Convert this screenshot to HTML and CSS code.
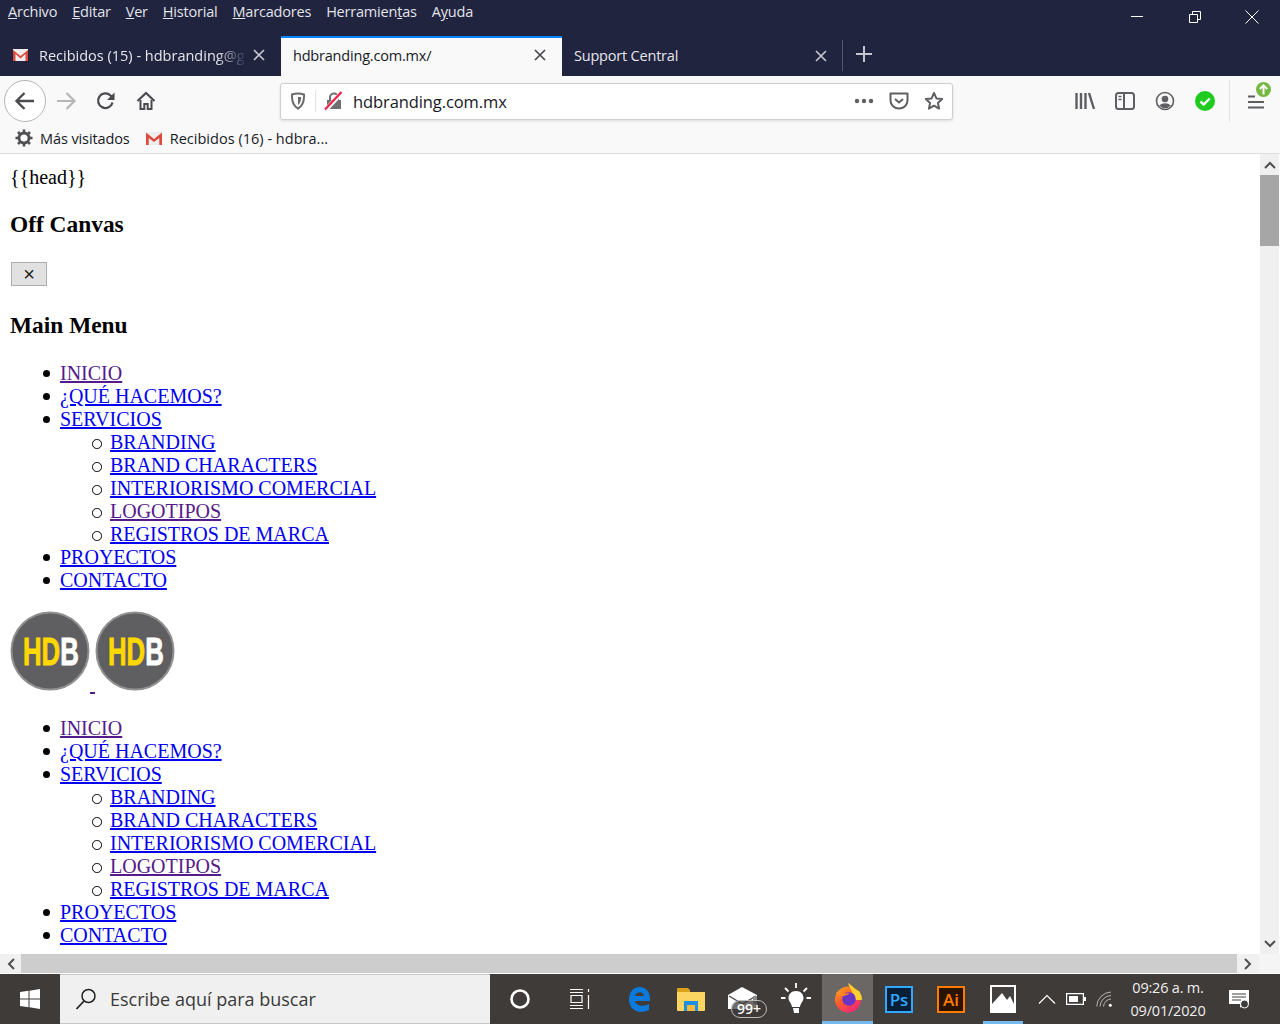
FILE: index.html
```html
<!DOCTYPE html>
<html lang="es">
<head>
<meta charset="utf-8">
<title>hdbranding.com.mx</title>
<link rel="stylesheet" href="styles.css">
</head>
<body>
<div class="window">
  <header class="chrome-top">
    <div class="menubar">
      <nav class="menu">
        <span><u>A</u>rchivo</span><span><u>E</u>ditar</span><span><u>V</u>er</span><span><u>H</u>istorial</span><span><u>M</u>arcadores</span><span>Herramien<u>t</u>as</span><span>A<u>y</u>uda</span>
      </nav>
      <div class="winctl">
        <button class="winbtn"><svg width="14" height="14" viewBox="0 0 14 14"><path d="M1 6.500h12" stroke="#fff" fill="none"/></svg></button>
        <button class="winbtn"><svg width="14" height="14" viewBox="0 0 14 14"><path d="M1.500 4.500h8v8h-8zM4.500 4V1.500h8v8H10" stroke="#fff" fill="none"/></svg></button>
        <button class="winbtn"><svg width="14" height="14" viewBox="0 0 14 14"><path d="M.5.500l13 13M13.500.500l-13 13" stroke="#fff" fill="none"/></svg></button>
      </div>
    </div>
    <div class="tabs">
      <div class="tab first">
        <svg class="favicon" width="17" height="14" viewBox="0 0 17 14"><path d="M1 1h15v12H1z" fill="#eee"/><path d="M1 13V2l7.500 6L16 2v11h-2.500V6L8.500 10.500 3.500 6v7z" fill="#db4a3c"/></svg>
        <span class="tab-title fade">Recibidos (15) - hdbranding@g</span>
        <svg class="tab-x" width="12" height="12" viewBox="0 0 12 12"><path d="M1 1l10 10M11 1L1 11" stroke="#c4c5ce" stroke-width="1.700" fill="none"/></svg>
      </div>
      <div class="tab active">
        <span class="tab-title">hdbranding.com.mx/</span>
        <svg class="tab-x" width="12" height="12" viewBox="0 0 12 12"><path d="M1 1l10 10M11 1L1 11" stroke="#4a4a4f" stroke-width="1.700" fill="none"/></svg>
      </div>
      <div class="tab last">
        <span class="tab-title">Support Central</span>
        <svg class="tab-x" width="12" height="12" viewBox="0 0 12 12"><path d="M1 1l10 10M11 1L1 11" stroke="#c4c5ce" stroke-width="1.700" fill="none"/></svg>
      </div>
      <div class="newtab">
        <svg width="18" height="18" viewBox="0 0 18 18"><path d="M9 1v16M1 9h16" stroke="#c4c5ce" stroke-width="2" fill="none"/></svg>
      </div>
    </div>
  </header>

  <div class="toolbar">
    <div class="nav-left">
      <div class="back"><svg width="22" height="20" viewBox="0 0 22 20"><path d="M20 10H3M10.500 2L2.500 10l8 8" stroke="#4a4a4f" stroke-width="2.400" fill="none"/></svg></div>
      <div class="navbtn fwd"><svg width="22" height="20" viewBox="0 0 22 20"><path d="M2 10h17M11.500 2l8 8-8 8" stroke="#b6b6b8" stroke-width="2.200" fill="none"/></svg></div>
      <div class="navbtn"><svg width="20" height="20" viewBox="0 0 20 20"><path d="M16.500 11.500A7.300 7.300 0 1 1 14.500 4.500L17 7" stroke="#4a4a4f" stroke-width="2.300" fill="none"/><path d="M18.500 1.500v7.500h-7.500z" fill="#4a4a4f"/></svg></div>
      <div class="navbtn home"><svg width="20" height="20" viewBox="0 0 20 20"><path d="M1.500 10L10 2l8.500 8" stroke="#4a4a4f" stroke-width="2.200" fill="none"/><path d="M4.500 9v9h3.800v-5h3.400v5h3.800V9" stroke="#4a4a4f" stroke-width="2" fill="none"/></svg></div>
    </div>
    <div class="urlbar">
      <span class="url-shield"><svg width="16" height="18" viewBox="0 0 16 18"><path d="M2 2.500Q8 .5 14 2.500 14.500 13 8 16.500 1.500 13 2 2.500z" stroke="#6b6b6f" stroke-width="2" fill="none"/><path d="M8 5v8Q11 11 11.200 5z" fill="#6b6b6f"/></svg></span>
      <span class="url-lock"><svg width="20" height="20" viewBox="0 0 20 20"><path d="M6 9V6.500a4 4 0 0 1 8 0V9" stroke="#6f6f72" stroke-width="2" fill="none"/><path d="M3 9h14v9H3z" fill="#6f6f72"/><path d="M2 18.500L18 1.500" stroke="#f9f9fa" stroke-width="4.500"/><path d="M1 18.500L17.500 1" stroke="#f1224a" stroke-width="2.200"/></svg></span>
      <span class="url-text">hdbranding.com.mx</span>
      <span class="url-actions">
        <svg width="20" height="6" viewBox="0 0 20 6"><circle cx="3" cy="3" r="2.200" fill="#5f5f63"/><circle cx="10" cy="3" r="2.200" fill="#5f5f63"/><circle cx="17" cy="3" r="2.200" fill="#5f5f63"/></svg>
        <svg width="20" height="18" viewBox="0 0 20 18"><path d="M1.500 1.500h17v7a8.500 8 0 0 1-17 0z" stroke="#5f5f63" stroke-width="2" stroke-linejoin="round" fill="none"/><path d="M6 7l4 3.500L14 7" stroke="#5f5f63" stroke-width="2" fill="none"/></svg>
        <svg width="20" height="20" viewBox="0 0 20 20"><path d="M10 2l2.400 5.400 5.800.6-4.300 3.900 1.200 5.700L10 14.700 4.900 17.600l1.200-5.700L1.800 8l5.800-.6z" stroke="#5f5f63" stroke-width="2" stroke-linejoin="round" fill="none"/></svg>
      </span>
    </div>
    <div class="tools">
      <svg width="20" height="18" viewBox="0 0 20 18"><path d="M1.500 1v16M6 1v16M10.500 1v16M14 1l5 16" stroke="#5f5f63" stroke-width="2.400" fill="none"/></svg>
      <svg width="20" height="18" viewBox="0 0 20 18"><rect x="1" y="1" width="18" height="16" rx="2.500" stroke="#5f5f63" stroke-width="2" fill="none"/><path d="M9 1v16" stroke="#5f5f63" stroke-width="2"/><path d="M3.500 4.500h3M3.500 7.500h3" stroke="#5f5f63" stroke-width="1.500"/></svg>
      <svg width="20" height="20" viewBox="0 0 20 20"><circle cx="10" cy="10" r="8.500" stroke="#5f5f63" stroke-width="1.600" fill="none"/><circle cx="10" cy="8" r="3.300" fill="#5f5f63"/><path d="M4 14.500Q10 10 16 14.500 10 20 4 14.500z" fill="#5f5f63"/></svg>
      <svg width="20" height="20" viewBox="0 0 20 20"><circle cx="10" cy="10" r="10" fill="#1ecb1e"/><path d="M5.500 10.500l3.200 3 6-6" stroke="#fff" stroke-width="2.400" fill="none"/></svg>
      <span class="tool-sep"></span>
      <span class="hamburger">
        <svg width="16" height="14" viewBox="0 0 16 14"><path d="M0 1.500h7M0 7h16M0 12.500h16" stroke="#5f5f63" stroke-width="2.200"/></svg>
        <svg class="update" width="15" height="15" viewBox="0 0 15 15"><circle cx="7.500" cy="7.500" r="7.500" fill="#75b843"/><path d="M7.500 12.500V3.500M3.800 7l3.700-3.700L11.200 7" stroke="#fff" stroke-width="2" fill="none"/></svg>
      </span>
    </div>
  </div>

  <div class="bookmarks">
    <span class="bm"><svg width="18" height="18" viewBox="0 0 18 18"><circle cx="9" cy="9" r="5" stroke="#4f4f53" stroke-width="2.800" fill="none"/><path d="M9 .5v3.500M9 14v3.500M.5 9H4M14 9h3.500M3 3l2.500 2.500M12.500 12.500L15 15M15 3l-2.500 2.500M5.500 12.500L3 15" stroke="#4f4f53" stroke-width="2.600"/></svg>Más visitados</span>
    <span class="bm bm-mail"><svg width="18" height="15" viewBox="0 0 18 15"><path d="M1 1h16v13H1z" fill="#eee"/><path d="M1 14V1.500l8 6.500 8-6.500V14h-2.700V7L9 11 3.700 7v7z" fill="#db4a3c"/></svg>Recibidos (16) - hdbra...</span>
  </div>

  <div class="viewport">
    <main class="page">
      <div>{{head}}</div>
      <h3 class="h-first">Off Canvas</h3>
      <div><button class="closebtn">×</button></div>
      <h3 class="h-second">Main Menu</h3>
      <ul>
        <li><a class="seen" href="#">INICIO</a></li>
        <li><a href="#">¿QUÉ HACEMOS?</a></li>
        <li><a href="#">SERVICIOS</a>
          <ul>
            <li><a href="#">BRANDING</a></li>
            <li><a href="#">BRAND CHARACTERS</a></li>
            <li><a href="#">INTERIORISMO COMERCIAL</a></li>
            <li><a class="seen" href="#">LOGOTIPOS</a></li>
            <li><a href="#">REGISTROS DE MARCA</a></li>
          </ul>
        </li>
        <li><a href="#">PROYECTOS</a></li>
        <li><a href="#">CONTACTO</a></li>
      </ul>
      <div class="logos"><a class="seen" href="#"><svg class="logo" width="80" height="80" viewBox="0 0 80 80"><circle cx="40" cy="40" r="38.500" fill="#5f5f61" stroke="#8f8f90" stroke-width="2"/><text class="logo-text" transform="translate(13 54) scale(.66 1)"><tspan class="logo-hd">HD</tspan><tspan class="logo-b">B</tspan></text></svg> </a><a class="seen" href="#"><svg class="logo" width="80" height="80" viewBox="0 0 80 80"><circle cx="40" cy="40" r="38.500" fill="#5f5f61" stroke="#8f8f90" stroke-width="2"/><text class="logo-text" transform="translate(13 54) scale(.66 1)"><tspan class="logo-hd">HD</tspan><tspan class="logo-b">B</tspan></text></svg></a></div>
      <ul>
        <li><a class="seen" href="#">INICIO</a></li>
        <li><a href="#">¿QUÉ HACEMOS?</a></li>
        <li><a href="#">SERVICIOS</a>
          <ul>
            <li><a href="#">BRANDING</a></li>
            <li><a href="#">BRAND CHARACTERS</a></li>
            <li><a href="#">INTERIORISMO COMERCIAL</a></li>
            <li><a class="seen" href="#">LOGOTIPOS</a></li>
            <li><a href="#">REGISTROS DE MARCA</a></li>
          </ul>
        </li>
        <li><a href="#">PROYECTOS</a></li>
        <li><a href="#">CONTACTO</a></li>
      </ul>
    </main>
    <div class="vscroll">
      <span class="sb-btn"><svg width="12" height="8" viewBox="0 0 12 8"><path d="M1 7l5-5 5 5" stroke="#505050" stroke-width="2" fill="none"/></svg></span>
      <span class="vthumb"></span>
      <span class="sb-fill"></span>
      <span class="sb-btn"><svg width="12" height="8" viewBox="0 0 12 8"><path d="M1 1l5 5 5-5" stroke="#505050" stroke-width="2" fill="none"/></svg></span>
    </div>
  </div>

  <div class="hscroll">
    <span class="hbtn"><svg width="8" height="12" viewBox="0 0 8 12"><path d="M7 1L2 6l5 5" stroke="#505050" stroke-width="2" fill="none"/></svg></span>
    <span class="hthumb"></span>
    <span class="hbtn wide"><svg width="8" height="12" viewBox="0 0 8 12"><path d="M1 1l5 5-5 5" stroke="#505050" stroke-width="2" fill="none"/></svg></span>
    <span class="corner"></span>
  </div>

  <footer class="taskbar">
    <div class="start"><svg width="20" height="20" viewBox="0 0 20 20"><path d="M0 3l8.500-1.200v7.700H0zM9.500 1.700L20 0v9.500H9.500zM0 10.500h8.500v7.700L0 17zM9.500 10.500H20V20L9.500 18.300z" fill="#fff"/></svg></div>
    <div class="search">
      <svg width="22" height="22" viewBox="0 0 22 22"><circle cx="13.500" cy="8" r="6.500" stroke="#222" stroke-width="1.500" fill="none"/><path d="M9 13l-7.500 8" stroke="#222" stroke-width="1.800"/></svg>
      <span>Escribe aquí para buscar</span>
    </div>
    <div class="apps">
      <span class="app"><svg width="20" height="20" viewBox="0 0 20 20"><circle cx="10" cy="10" r="8.500" stroke="#fff" stroke-width="2.600" fill="none"/></svg></span>
      <span class="app tv"><svg width="22" height="20" viewBox="0 0 22 20"><path d="M1 .5h13M1 3.500h13M1 16.500h13M1 19.500h13M2 6.500h11v7H2zM19.500 0v3M19.500 6v14" stroke="#fff" stroke-width="1.200" fill="none"/></svg></span>
      <span class="app"><svg width="26" height="28" viewBox="0 0 26 28"><path d="M3 15C3 6 8 2 14 2c6 0 10 5 10 12v2H9c.5 5 9 6 14 3v6c-8 4-19 2-20-10zM9 11h9c0-5-8-5-9 0z" fill="#0a7bdc"/></svg></span>
      <span class="app"><svg width="28" height="24" viewBox="0 0 28 24"><path d="M0 2a1 1 0 0 1 1-1h10l2 2v3H0z" fill="#d9a118"/><path d="M0 5h28v18a1 1 0 0 1-1 1H1a1 1 0 0 1-1-1z" fill="#fcd462"/><path d="M7 14h14v10h-3v-6h-8v6H7z" fill="#1d8fe0"/><path d="M10 18h8v6h-8z" fill="#f6b93b"/></svg></span>
      <span class="app"><svg width="30" height="26" viewBox="0 0 30 26"><path d="M0 9L14 1l15 8v14H0z" fill="#fff"/><path d="M1 10l13.500 8L28 10" stroke="#45413e" stroke-width="1.300" fill="none"/><path d="M25 10h4v8h-4z" fill="#8a8a8a"/></svg><span class="mailbadge">99+</span></span>
      <span class="app bulb"><svg width="30" height="32" viewBox="0 0 30 32"><path d="M15 8c-5 0-7.500 3.500-7.500 7 0 3.500 3 5 3.500 9h8c.5-4 3.500-5.500 3.500-9 0-3.500-2.500-7-7.500-7z" fill="#fff"/><path d="M12 25h6v5h-5z" fill="#fff"/><path d="M15 0v5M4 5l3.500 3.500M26 5l-3.500 3.500M0 15h4.500M25.500 15H30" stroke="#fff" stroke-width="1.800"/></svg></span>
      <span class="app current"><svg width="30" height="30" viewBox="0 0 30 30"><defs><linearGradient id="fx" x1="0" y1="0" x2=".7" y2="1"><stop offset="0" stop-color="#ffb01f"/><stop offset=".5" stop-color="#ff5a2c"/><stop offset="1" stop-color="#f0267a"/></linearGradient></defs><circle cx="15" cy="16.500" r="13" fill="url(#fx)"/><path d="M15 0c5 3 6 6 11 8 3 4 3 8 3 9h-8C21 10 17 6 15 0z" fill="#ffcf2e"/><circle cx="16" cy="16" r="6.800" fill="#6a35c4"/><path d="M3 9q5-1 8 2l6-1q-3 3-7 3-5 0-7-4z" fill="#ff8a1f"/></svg></span>
      <span class="app"><span class="adobe ps">Ps</span></span>
      <span class="app"><span class="adobe ai">Ai</span></span>
      <span class="app open"><svg width="26" height="28" viewBox="0 0 26 28"><path d="M0 0h26v28H0z" fill="#fff"/><path d="M2 2h22v17l-4-8-3 4-5-7-10 11z" fill="#45413e"/></svg></span>
    </div>
    <div class="tray">
      <svg width="18" height="10" viewBox="0 0 18 10"><path d="M1 9.500l8-8 8 8" stroke="#fff" stroke-width="1.200" fill="none"/></svg>
      <svg width="20" height="12" viewBox="0 0 20 12"><path d="M.6.600h16.800v10.800H.6z" stroke="#fff" stroke-width="1.200" fill="none"/><path d="M3 3h9v6H3z" fill="#fff"/><path d="M18 4h2v4h-2z" fill="#fff"/></svg>
      <svg width="16" height="16" viewBox="0 0 16 16"><path d="M.7 15.500A15 15 0 0 1 15 1M4 15.500A11.500 11.500 0 0 1 15 4.500M7.500 15.500A8 8 0 0 1 15 8" stroke="#b8b6b4" fill="none"/><circle cx="14.300" cy="14.300" r="1.500" fill="#fff"/></svg>
      <div class="clock"><span>09:26 a. m.</span><span>09/01/2020</span></div>
      <span class="notif"><svg width="21" height="19" viewBox="0 0 21 19"><path d="M0 0h20v14h-6l-3 4v-4H0z" fill="#fff"/><path d="M3 4h14M3 7h14M3 10h9" stroke="#45413e" stroke-width="1"/><circle cx="15.500" cy="14" r="4" fill="#3f3b39" stroke="#fff"/></svg></span>
    </div>
  </footer>
</div>
</body>
</html>
```

FILE: styles.css
```css
* { box-sizing: border-box; }
html, body { margin: 0; padding: 0; background: #fff; }
.window { width: 1280px; height: 1024px; display: flex; flex-direction: column; overflow: hidden; font-family: "Open Sans", "Noto Sans", sans-serif; }

.chrome-top { background: #20243f; height: 76px; color: #fff; flex: none; }
.menubar { height: 36px; display: flex; justify-content: space-between; }
.menu { display: flex; gap: 15px; padding: 2px 0 0 8px; font-size: 14.500px; line-height: 19px; color: #e2e3ea; letter-spacing: -.2px; }
.winctl { display: flex; }
.winbtn { width: 58px; height: 34px; background: none; border: 0; padding: 0; display: flex; align-items: center; justify-content: center; }
.winbtn:last-child { width: 56px; }

.tabs { height: 40px; display: flex; }
.tab { width: 281px; display: flex; align-items: center; padding: 0 15px 2px 12px; font-size: 14.500px; color: #e6e6ec; letter-spacing: -.2px; }
.tab-title { flex: 1; white-space: nowrap; overflow: hidden; }
.tab.first { padding-right: 16px; letter-spacing: 0; }
.fade { margin-left: 10px; margin-right: 6px; -webkit-mask-image: linear-gradient(to right, #000 85%, transparent); mask-image: linear-gradient(to right, #000 85%, transparent); }
.tab.active { background: #f9f9fa; color: #18191f; border-top: 2px solid #0a84ff; padding-right: 16px; padding-bottom: 4px; }
.tab.last { border-right: 1px solid #52556c; height: 31px; margin-top: 4px; padding-bottom: 0; }
.newtab { width: 42px; display: flex; align-items: center; justify-content: center; padding-bottom: 4px; }

.toolbar { height: 49px; flex: none; background: #f9f9fa; display: flex; align-items: center; }
.nav-left { display: flex; align-items: center; width: 280px; padding-left: 4px; }
.back { width: 42px; height: 42px; border-radius: 50%; border: 1px solid #b6b6b8; background: #fff; display: flex; align-items: center; justify-content: center; }
.navbtn { width: 40px; display: flex; justify-content: center; }
.urlbar { width: 673px; height: 37px; margin-top: 1px; border: 1px solid #cfcfd1; border-radius: 3px; background: #fff; box-shadow: 0 1px 3px rgba(0,0,0,.12); display: flex; align-items: center; }
.url-shield { width: 35px; height: 22px; display: flex; align-items: center; justify-content: center; border-right: 1px solid #e2e2e4; }
.url-lock { width: 36px; display: flex; justify-content: center; margin-right: 1px; }
.url-text { flex: 1; font-size: 16.500px; color: #18191f; letter-spacing: -.1px; }
.url-actions { display: flex; align-items: center; gap: 15px; padding-right: 8px; }
.tools { flex: 1; display: flex; align-items: center; gap: 20px; padding-left: 122px; }
.tool-sep { width: 1px; height: 42px; background: #e2e2e4; margin-left: -6px; margin-right: -2px; }
.hamburger { position: relative; display: flex; margin-top: 2px; }
.update { position: absolute; right: -7px; top: -13px; }

.bookmarks { height: 29px; flex: none; background: #f9f9fa; border-bottom: 1px solid #dedee0; display: flex; gap: 15px; padding: 0 0 2px 15px; align-items: center; font-size: 14.500px; letter-spacing: -.1px; color: #18191f; }
.bm { display: flex; align-items: center; gap: 7px; }
.bm-mail { letter-spacing: .02px; }

.viewport { flex: 1; min-height: 0; display: flex; background: #fff; }
.page { flex: none; width: 1260px; padding: 11.500px 10px 0; font-family: "Liberation Serif", serif; font-size: 20px; line-height: 23px; color: #000; overflow: hidden; }
.page h3 { font-size: 23.400px; line-height: 27px; margin: 23.400px 0; font-weight: bold; }
.page h3.h-first { margin-top: 22.400px; margin-bottom: 24.400px; }
.page h3.h-second { margin-top: 25.400px; }
.page ul { margin: 19px 0; padding-left: 50px; }
.page ul ul { margin: 0; }
.page li { list-style: none; position: relative; }
.page li::before { content: ""; position: absolute; left: -17px; top: 8px; width: 7px; height: 7px; border-radius: 50%; background: #000; }
.page ul ul li::before { background: none; border: 1px solid #000; left: -18px; width: 7.500px; height: 7.500px; }
.page a { color: #0000ee; }
.page a.seen { color: #551a8b; }
.closebtn { display: block; width: 36px; height: 24px; margin-left: 1px; padding: 0; background: #e1e1e1; border: 1px solid #adadad; font-family: "Liberation Sans", sans-serif; font-size: 20px; line-height: 22px; color: #222; }
.logos { height: 87px; }
.logo { vertical-align: baseline; }
.logo-text { font-family: "Liberation Sans", sans-serif; font-weight: bold; font-size: 39px; stroke-width: .9px; }
.logo-hd { fill: #ffd800; stroke: #ffd800; }
.logo-b { fill: #fff; stroke: #fff; }

.vscroll { width: 19px; flex: none; margin-right: 1px; background: #f0f0f0; display: flex; flex-direction: column; }
.sb-btn { height: 21px; flex: none; display: flex; align-items: center; justify-content: center; }
.vthumb { height: 71px; flex: none; background: #a6a6a6; }
.sb-fill { flex: 1; }

.hscroll { height: 20px; flex: none; display: flex; padding-bottom: 1px; }
.hbtn { width: 21px; background: #f0f0f0; display: flex; align-items: center; justify-content: center; }
.hbtn.wide { width: 22px; }
.hthumb { width: 1216px; background: #cdcdcd; }
.corner { flex: 1; background: #f5f5f5; }

.taskbar { height: 50px; flex: none; background: #3f3b39; display: flex; color: #fff; }
.start { width: 60px; display: flex; align-items: center; justify-content: center; }
.search { width: 430px; background: #f0f0f0; border: 1px solid #c8c8c8; border-width: 1px 0; color: #3a3a3a; display: flex; align-items: center; gap: 13px; padding-left: 15px; font-size: 18px; }
.apps { display: flex; margin-left: 4px; }
.app { width: 52px; height: 50px; position: relative; display: flex; align-items: center; justify-content: center; }
.app.tv { width: 67px; }
.app.bulb { width: 53px; }
.app.current { width: 51px; background: #6b6764; border-bottom: 3px solid #76b9ed; }
.app.open::after { content: ""; position: absolute; left: 6px; right: 6px; bottom: 0; height: 3px; background: #76b9ed; }
.mailbadge { position: absolute; left: 14px; top: 26px; width: 36px; height: 18px; border: 1px solid #bbb; border-radius: 9px; background: rgba(63,59,57,.75); font-size: 14px; line-height: 16px; text-align: center; font-weight: 600; color: #fff; }
.adobe { width: 28px; height: 27px; display: flex; align-items: center; justify-content: center; font-size: 17px; font-weight: 600; border: 2px solid; }
.ps { color: #31a8ff; border-color: #31a8ff; background: #061e36; }
.ai { color: #ff7c00; border-color: #ff7c00; background: #2a1300; }
.tray { flex: 1; display: flex; align-items: center; padding-left: 9px; gap: 10px; }
.clock { display: flex; flex-direction: column; align-items: center; width: 80px; margin-left: 6px; font-size: 14.500px; line-height: 23px; color: #eeeeee; letter-spacing: -.2px; }
.notif { margin-left: 11px; display: flex; }
```
